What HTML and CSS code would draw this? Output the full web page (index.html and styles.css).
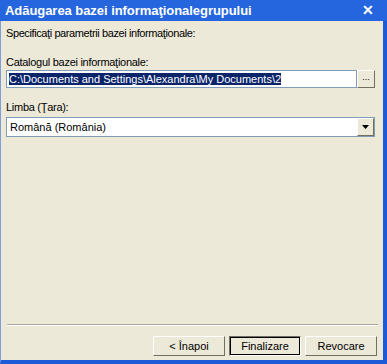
FILE: index.html
```html
<!DOCTYPE html>
<html lang="ro">
<head>
    <meta charset="UTF-8">
    <title>Adăugarea bazei informaţionalegrupului</title>
    <link rel="stylesheet" href="styles.css">
</head>
<body>
    <div class="window">
        <div class="titlebar">
            <span class="title">Adăugarea bazei informaţionalegrupului</span>
            <span class="close">&#x2715;</span>
        </div>
        <div class="content">
            <p class="intro">Specificaţi parametrii bazei informaţionale:</p>

            <label class="field-label">Catalogul bazei informaţionale:</label>
            <div class="field">
                <div class="input"><span class="selected">C:\Documents and Settings\Alexandra\My Documents\2</span></div>
                <div class="side-btn">...</div>
            </div>

            <label class="field-label lang">Limba (Ţara):</label>
            <div class="field combo">
                <div class="input">Română (România)</div>
                <div class="side-btn arrow">
                    <svg width="7" height="4" viewBox="0 0 7 4"><path d="M0 0h7L3.5 4z" fill="#000"/></svg>
                </div>
            </div>

            <div class="spacer"></div>
            <hr class="separator">
            <div class="buttons">
                <button class="btn">&lt; Înapoi</button>
                <button class="btn default">Finalizare</button>
                <button class="btn">Revocare</button>
            </div>
        </div>
    </div>
</body>
</html>
```

FILE: styles.css
```css
* {
    margin: 0;
    padding: 0;
    box-sizing: border-box;
}

body {
    width: 387px;
    height: 364px;
    overflow: hidden;
    font-family: "Liberation Sans", Arial, sans-serif;
    font-size: 11px;
    color: #000;
    background: #ece9d8;
}

/* Window frame */
.window {
    width: 387px;
    height: 364px;
    display: flex;
    flex-direction: column;
    border-left: 1px solid #7f9ddb;
    border-right: 4px solid #1c5ad8;
    border-bottom: 4px solid #1c5ad8;
    background: #ece9d8;
}

.titlebar {
    height: 21px;
    display: flex;
    align-items: center;
    justify-content: space-between;
    padding: 0 13px 1px 5px;
    background: #2566de;
    color: #fff;
    margin-left: -1px;
    margin-right: -4px;
}

.title {
    font-family: "Liberation Sans", Arial, sans-serif;
    font-weight: bold;
    font-size: 13px;
    letter-spacing: -0.05px;
}

.close {
    font-size: 14px;
    font-weight: bold;
}

.content {
    flex: 1;
    display: flex;
    flex-direction: column;
    padding: 6px 6px 4px 5px;
}

.intro {
    margin-bottom: 17px;
    letter-spacing: -0.4px;
}

.field-label {
    display: block;
    margin-bottom: 2px;
    letter-spacing: -0.28px;
}

.field-label.lang {
    margin-top: 13px;
    margin-bottom: 4px;
}

.field {
    display: flex;
    height: 18px;
    margin-right: 2px;
}

.field.combo {
    height: 20px;
    border: 1px solid #7f9db9;
    background: #fff;
}

.input {
    flex: 1;
    background: #fff;
    border: 1px solid #7f9db9;
    padding: 1px 2px;
    white-space: nowrap;
    overflow: hidden;
    line-height: 14px;
}

.combo .input {
    border: none;
    padding: 2px 3px;
}

.selected {
    background: #0a246a;
    color: #fff;
}

.side-btn {
    width: 18px;
    background: #ece9d8;
    border: 1px solid;
    border-color: #fff #716f64 #716f64 #fff;
    display: flex;
    align-items: center;
    justify-content: center;
    font-size: 9px;
    line-height: 1;
    padding-bottom: 3px;
}

.side-btn.arrow {
    padding-bottom: 0;
    width: 17px;
}

.spacer {
    flex: 1;
}

.separator {
    border: none;
    border-top: 1px solid #aca899;
    border-bottom: 1px solid #fff;
    margin: 0 -1px 10px 1px;
}

.buttons {
    display: flex;
    justify-content: flex-end;
    gap: 4px;
}

.btn {
    font-family: "Liberation Sans", Arial, sans-serif;
    font-size: 11px;
    height: 20px;
    width: 72px;
    background: #ece9d8;
    border: 1px solid;
    border-color: #fff #716f64 #716f64 #fff;
    color: #000;
}

.btn.default {
    outline: 1px solid #000;
    outline-offset: -2px;
    border-color: #716f64 #fff #fff #716f64;
}
```
